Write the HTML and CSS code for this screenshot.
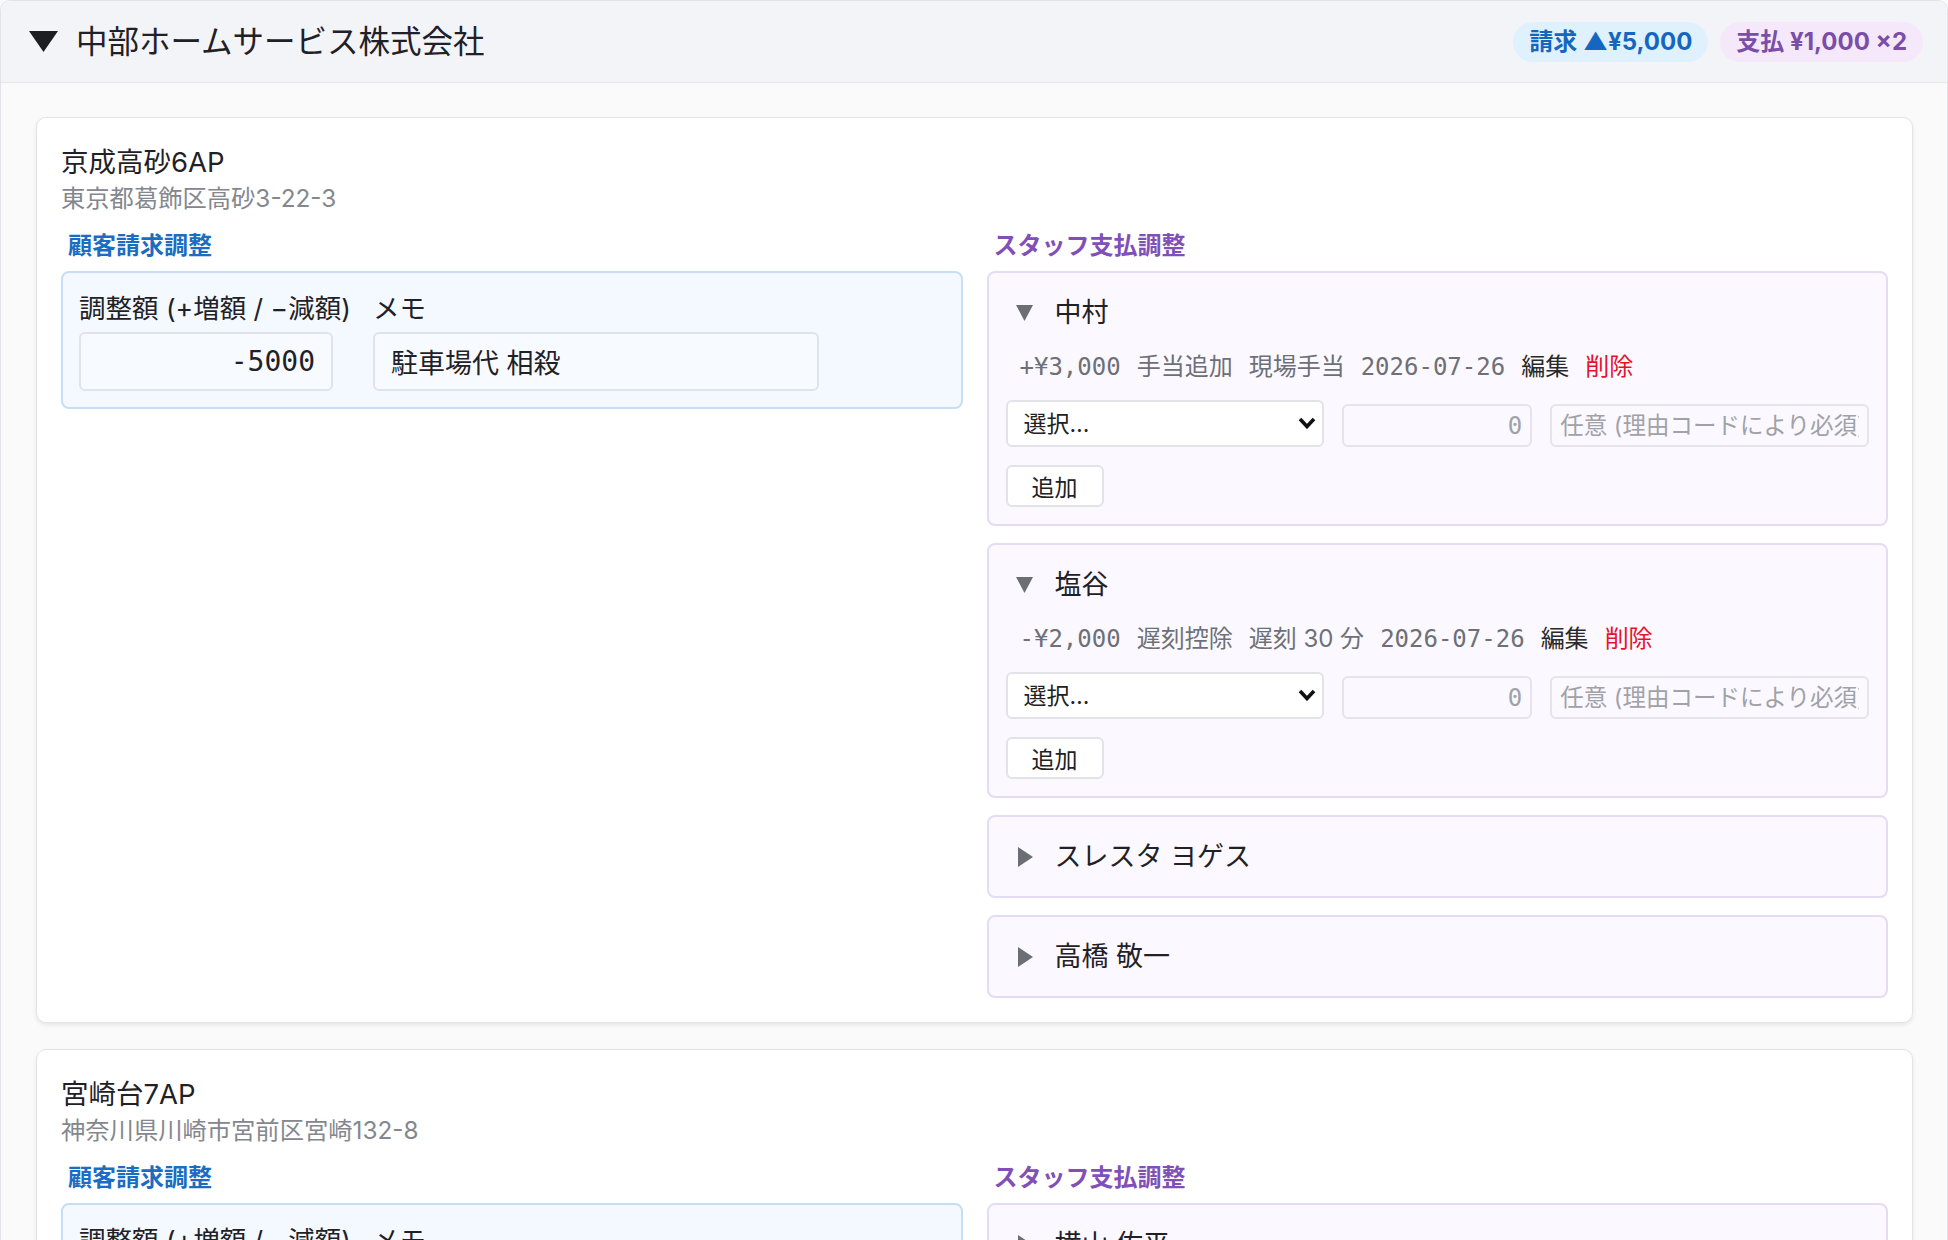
FILE: index.html
```html
<!DOCTYPE html>
<html lang="ja">
<head>
    <meta charset="utf-8">
    <title>調整入力</title>
    <link rel="stylesheet" href="styles.css">
</head>
<body>
    <details class="group" open>
        <summary class="group-head">
            <svg class="caret-big" viewBox="0 0 29 21"><polygon points="0,0 29,0 14.5,21" fill="#1d1e22"/></svg>
            <span class="group-name">中部ホームサービス株式会社</span>
            <span class="badges">
                <span class="badge bill">請求 ▲¥5,000</span>
                <span class="badge pay">支払 ¥1,000 ×2</span>
            </span>
        </summary>

        <div class="group-body">
            <section class="site">
                <div class="site-name">京成高砂6AP</div>
                <div class="site-addr">東京都葛飾区高砂3-22-3</div>
                <div class="site-cols">
                    <div class="col">
                        <h3 class="col-title bill">顧客請求調整</h3>
                        <div class="bill-box">
                            <div class="bill-grid">
                                <label>調整額 (+増額 / −減額)</label>
                                <label>メモ</label>
                                <input class="amt" type="text" value="-5000">
                                <input class="memo" type="text" value="駐車場代 相殺">
                            </div>
                        </div>
                    </div>

                    <div class="col">
                        <h3 class="col-title pay">スタッフ支払調整</h3>
                        <div class="staff-list">
                            <details class="staff" open>
                                <summary>
                                    <svg class="tri-open" viewBox="0 0 17 16"><polygon points="0,0 17,0 8.5,16" fill="#6b6e75"/></svg>
                                    <svg class="tri" viewBox="0 0 15 20"><polygon points="0,0 15,10 0,20" fill="#6b6e75"/></svg>
                                    中村
                                </summary>
                                <div class="staff-body">
                                    <div class="adj">
                                        <span class="mono">+¥3,000</span>
                                        <span>手当追加</span>
                                        <span>現場手当</span>
                                        <span class="mono">2026-07-26</span>
                                        <span class="edit">編集</span>
                                        <span class="del">削除</span>
                                    </div>
                                    <div class="add-row">
                                        <span class="pick">
                                            <select><option>選択…</option></select>
                                            <svg class="chev" viewBox="0 0 18 12"><path d="M2 2 L9 9.5 L16 2" fill="none" stroke="#111" stroke-width="3.6"/></svg>
                                        </span>
                                        <input class="num" type="text" placeholder="0">
                                        <input class="reason" type="text" placeholder="任意 (理由コードにより必須)">
                                    </div>
                                    <button class="add-btn">追加</button>
                                </div>
                            </details>

                            <details class="staff" open>
                                <summary>
                                    <svg class="tri-open" viewBox="0 0 17 16"><polygon points="0,0 17,0 8.5,16" fill="#6b6e75"/></svg>
                                    <svg class="tri" viewBox="0 0 15 20"><polygon points="0,0 15,10 0,20" fill="#6b6e75"/></svg>
                                    塩谷
                                </summary>
                                <div class="staff-body">
                                    <div class="adj">
                                        <span class="mono">-¥2,000</span>
                                        <span>遅刻控除</span>
                                        <span>遅刻 30 分</span>
                                        <span class="mono">2026-07-26</span>
                                        <span class="edit">編集</span>
                                        <span class="del">削除</span>
                                    </div>
                                    <div class="add-row">
                                        <span class="pick">
                                            <select><option>選択…</option></select>
                                            <svg class="chev" viewBox="0 0 18 12"><path d="M2 2 L9 9.5 L16 2" fill="none" stroke="#111" stroke-width="3.6"/></svg>
                                        </span>
                                        <input class="num" type="text" placeholder="0">
                                        <input class="reason" type="text" placeholder="任意 (理由コードにより必須)">
                                    </div>
                                    <button class="add-btn">追加</button>
                                </div>
                            </details>

                            <details class="staff">
                                <summary>
                                    <svg class="tri-open" viewBox="0 0 17 16"><polygon points="0,0 17,0 8.5,16" fill="#6b6e75"/></svg>
                                    <svg class="tri" viewBox="0 0 15 20"><polygon points="0,0 15,10 0,20" fill="#6b6e75"/></svg>
                                    スレスタ ヨゲス
                                </summary>
                            </details>

                            <details class="staff">
                                <summary>
                                    <svg class="tri-open" viewBox="0 0 17 16"><polygon points="0,0 17,0 8.5,16" fill="#6b6e75"/></svg>
                                    <svg class="tri" viewBox="0 0 15 20"><polygon points="0,0 15,10 0,20" fill="#6b6e75"/></svg>
                                    高橋 敬一
                                </summary>
                            </details>
                        </div>
                    </div>
                </div>
            </section>

            <section class="site">
                <div class="site-name">宮崎台7AP</div>
                <div class="site-addr">神奈川県川崎市宮前区宮崎132-8</div>
                <div class="site-cols">
                    <div class="col">
                        <h3 class="col-title bill">顧客請求調整</h3>
                        <div class="bill-box">
                            <div class="bill-grid">
                                <label>調整額 (+増額 / −減額)</label>
                                <label>メモ</label>
                                <input class="amt" type="text">
                                <input class="memo" type="text">
                            </div>
                        </div>
                    </div>

                    <div class="col">
                        <h3 class="col-title pay">スタッフ支払調整</h3>
                        <div class="staff-list">
                            <details class="staff">
                                <summary>
                                    <svg class="tri-open" viewBox="0 0 17 16"><polygon points="0,0 17,0 8.5,16" fill="#6b6e75"/></svg>
                                    <svg class="tri" viewBox="0 0 15 20"><polygon points="0,0 15,10 0,20" fill="#6b6e75"/></svg>
                                    横山 佐平
                                </summary>
                            </details>
                            <details class="staff">
                                <summary>
                                    <svg class="tri-open" viewBox="0 0 17 16"><polygon points="0,0 17,0 8.5,16" fill="#6b6e75"/></svg>
                                    <svg class="tri" viewBox="0 0 15 20"><polygon points="0,0 15,10 0,20" fill="#6b6e75"/></svg>
                                    中村
                                </summary>
                            </details>
                        </div>
                    </div>
                </div>
            </section>
        </div>
    </details>
</body>
</html>
```

FILE: styles.css
```css
body {
    margin: 0;
    font-family: "Inter", "Noto Sans CJK JP", sans-serif;
    color: #1f2126;
    background: #fafafa;
    overflow: hidden;
}

summary {
    list-style: none;
    cursor: pointer;
}

summary::-webkit-details-marker {
    display: none;
}

/* company group */
.group {
    border: 1px solid #e2e3e8;
    border-radius: 10px;
    background: #fafafa;
}

.group-head {
    display: flex;
    align-items: center;
    height: 81px;
    padding: 0 24px 0 28px;
    background: #f3f4f8;
    border-bottom: 1px solid #e6e7eb;
    border-radius: 10px 10px 0 0;
}

.caret-big {
    width: 29px;
    height: 21px;
    margin-right: 18px;
}

.group-name {
    font-size: 31.5px;
    line-height: 40px;
}

.badges {
    margin-left: auto;
    display: flex;
    gap: 12px;
}

.badge {
    height: 40px;
    line-height: 40px;
    padding: 0 16px;
    border-radius: 20px;
    font-size: 24px;
    font-weight: 700;
}

.badge.bill {
    background: #dff1fd;
    color: #1566c0;
}

.badge.pay {
    background: #f5e8fb;
    color: #7a4ea8;
}

.group-body {
    display: flex;
    flex-direction: column;
    gap: 26px;
    padding: 34px 34px 0 35px;
}

/* site card */
.site {
    background: #fff;
    border: 1px solid #e4e4e8;
    border-radius: 10px;
    box-shadow: 0 2px 4px rgba(0, 0, 0, 0.08);
    padding: 25px 24px 24px;
}

.site-name {
    font-size: 27.5px;
    line-height: 38px;
}

.site-addr {
    font-size: 24.3px;
    line-height: 35px;
    color: #84878e;
}

.site-cols {
    display: grid;
    grid-template-columns: 1fr 1fr;
    gap: 24px;
    margin-top: 12px;
    align-items: start;
}

.col-title {
    margin: 0 0 8px;
    padding-left: 7px;
    font-size: 24px;
    line-height: 35px;
    font-weight: 700;
}

.col-title.bill {
    color: #1a6dc2;
}

.col-title.pay {
    color: #8050b8;
}

/* customer billing */
.bill-box {
    background: #f4f9ff;
    border: 2px solid #c7ddf3;
    border-radius: 8px;
    padding: 16px;
}

.bill-grid {
    display: grid;
    grid-template-columns: 276px 446px;
    column-gap: 18px;
    row-gap: 5px;
}

.bill-grid label {
    font-size: 26.5px;
    line-height: 38px;
    white-space: nowrap;
}

.bill-grid input {
    box-sizing: border-box;
    height: 59px;
    border: 2px solid #dfe3ea;
    border-radius: 6px;
    background: #f7fbff;
    color: #1f2126;
    outline: none;
}

.amt {
    width: 254px;
    padding: 0 16px;
    text-align: right;
    font: 28px "DejaVu Sans Mono", monospace;
}

.memo {
    width: 446px;
    padding: 0 16px;
    font: 27px "Inter", "Noto Sans CJK JP", sans-serif;
}

/* staff payments */
.staff-list {
    display: flex;
    flex-direction: column;
    gap: 17px;
}

.staff {
    background: #fbf9ff;
    border: 2px solid #e5dcf3;
    border-radius: 8px;
    padding: 17px;
}

.staff summary {
    display: flex;
    align-items: center;
    padding-left: 10px;
    font-size: 27px;
    line-height: 45px;
}

.tri {
    width: 15px;
    height: 20px;
    margin: 0 22px 0 2px;
}

.tri-open {
    display: none;
    width: 17px;
    height: 16px;
    margin-right: 22px;
}

.staff[open] .tri {
    display: none;
}

.staff[open] .tri-open {
    display: block;
}

.adj {
    display: flex;
    gap: 16px;
    margin-top: 15px;
    padding-left: 14px;
    font-size: 24px;
    line-height: 34px;
    color: #6d7077;
}

.mono {
    font-family: "DejaVu Sans Mono", monospace;
}

.adj .edit {
    color: #2a2a2a;
}

.adj .del {
    color: #e5112a;
}

.add-row {
    display: grid;
    grid-template-columns: 1fr 190px 1fr;
    gap: 18px;
    align-items: end;
    margin-top: 16px;
}

.pick {
    position: relative;
    display: block;
}

.pick select {
    appearance: none;
    -webkit-appearance: none;
    width: 100%;
    height: 47px;
    border: 2px solid #e2e2e7;
    border-radius: 6px;
    background: #fff;
    padding: 0 40px 0 16px;
    font: 23px "Inter", "Noto Sans CJK JP", sans-serif;
    color: #222;
}

.chev {
    position: absolute;
    right: 8px;
    top: 17px;
    width: 18px;
    height: 12px;
    pointer-events: none;
}

.add-row input {
    box-sizing: border-box;
    height: 43px;
    width: 100%;
    border: 2px solid #e4e4ea;
    border-radius: 6px;
    background: transparent;
    padding: 0 8px;
    outline: none;
}

.add-row input::placeholder {
    color: #a0a2a8;
}

.num {
    text-align: right;
    font: 24px "DejaVu Sans Mono", monospace;
}

.reason {
    font: 23.5px "Inter", "Noto Sans CJK JP", sans-serif;
}

.add-btn {
    display: block;
    margin-top: 18px;
    width: 98px;
    height: 42px;
    border: 2px solid #e2e2e7;
    border-radius: 6px;
    background: #fff;
    font: 23px "Inter", "Noto Sans CJK JP", sans-serif;
    color: #222;
}
```
